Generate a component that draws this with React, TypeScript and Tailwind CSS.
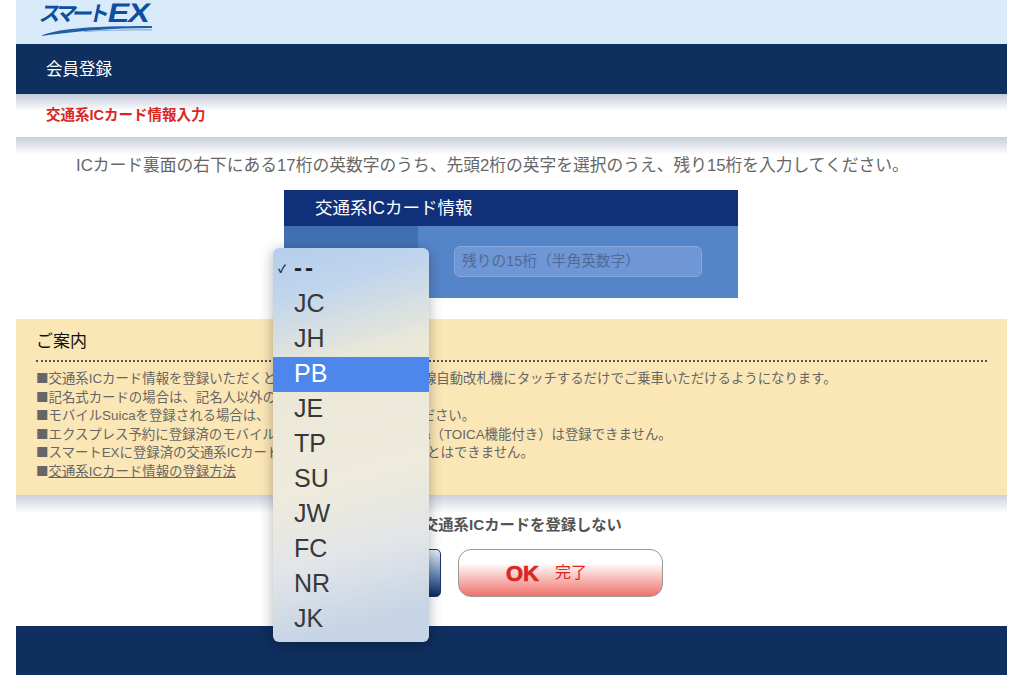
import React from 'react';

const CJK = "font-['Liberation_Sans','Noto_Sans_CJK_JP',sans-serif]";

const cardCodes = ['JC', 'JH', 'PB', 'JE', 'TP', 'SU', 'JW', 'FC', 'NR', 'JK'];

function Logo() {
  return (
    <div className="flex w-[112px] flex-col">
      <span className="flex h-[21px] origin-left -skew-x-12 items-end whitespace-nowrap font-bold text-[#0d4f9c]">
        <span className="text-[21px] leading-[21px] tracking-[-4.500px]">スマート</span>
        <span className="ml-[3px] inline-block origin-left scale-x-[1.2] text-[27px] leading-[21px] tracking-[-1px]">EX</span>
      </span>
      <svg width="112" height="13" viewBox="0 0 112 13" aria-hidden="true">
        <path d="M0 12C18 5 44 2 112 2V4C70 4 40 7 0 12Z" fill="#1f5fa8" />
        <path d="M44 7C62 5.800 85 5.200 112 5.200V6.400C85 6.400 62 6.800 44 8Z" fill="#8fb0d8" />
      </svg>
    </div>
  );
}

function SelectMenu() {
  return (
    <div className="absolute top-[248px] left-[273px] z-10 h-[394px] w-[156px] rounded-[6px] bg-[linear-gradient(165deg,#b3ceee_0%,#c0d5ec_12%,#ebe8d8_30%,#eeebdc_58%,#e2e5e8_75%,#c6d4e5_92%)] pt-[4px] text-[25px] leading-[33px] text-[#37383a] shadow-[0_2px_14px_rgba(0,0,0,0.3)]">
      <div className="relative flex h-[35px] items-center pl-[21px] text-[#1d2430]">
        <span className="absolute left-[5px] text-[11px] font-bold">✓</span>
        <span className="-mt-[5px] text-[24px] font-bold tracking-[3px]">--</span>
      </div>
      {cardCodes.map((code) => (
        <div
          key={code}
          className={code === 'PB' ? 'h-[35px] bg-[#4e87ec] pl-[21px] text-white' : 'h-[35px] pl-[21px]'}
        >
          {code}
        </div>
      ))}
    </div>
  );
}

function CardForm() {
  return (
    <div className="ml-[268px] w-[454px]">
      <div className="flex h-[36px] items-center bg-[#11307a] pl-[31px] text-[17.500px] text-white">交通系ICカード情報</div>
      <div className="flex h-[72px]">
        <div className="w-[134px] bg-[linear-gradient(180deg,#3f6eb0,#5282c4)]" />
        <div className="flex flex-1 items-start bg-[#5585c9] pt-[20px] pl-[36px]">
          <div className="flex h-[31px] w-[248px] items-center rounded-[6px] border border-[#86a8dc] bg-[#6f97d6] pl-[7px] text-[14.700px] text-[#4f6a96]">
            残りの15桁（半角英数字）
          </div>
        </div>
      </div>
    </div>
  );
}

function Square() {
  return <span className="font-['Noto_Sans_CJK_JP',sans-serif] text-[12.500px] leading-none">■</span>;
}

function Notice() {
  return (
    <div className="mt-[21px] h-[176px] bg-[#fbe7b6] px-[20px] pt-[11px] text-[13.400px] leading-[18.600px] whitespace-nowrap text-[#666]">
      <h2 className="border-b-2 border-dotted border-[#555] pb-[6px] text-[17px] leading-[24px] font-normal text-[#111]">ご案内</h2>
      <ul className="mt-[8px]">
        <li><Square />交通系ICカード情報を登録いただくと、東海道・山陽九州新幹線自動改札機にタッチするだけでご乗車いただけるようになります。</li>
        <li><Square />記名式カードの場合は、記名人以外の方は登録できません。</li>
        <li><Square />モバイルSuicaを登録される場合は、 JEを選択して入力してください。</li>
        <li><Square />エクスプレス予約に登録済のモバイルSuica 及び モバイルSuica（TOICA機能付き）は登録できません。</li>
        <li><Square />スマートEXに登録済の交通系ICカードは、重複して登録することはできません。</li>
        <li><Square /><span className="underline">交通系ICカード情報の登録方法</span></li>
      </ul>
    </div>
  );
}

export default function App() {
  return (
    <div className={`relative h-[695px] w-[1024px] overflow-hidden bg-white ${CJK}`}>
      <div className="mx-[16px] w-[991px]">
        <header className="flex h-[44px] items-start bg-[#d9ebfb] pt-[3px] pl-[24px]">
          <Logo />
        </header>
        <nav className="flex h-[50px] items-center bg-[#0f2f5e] pl-[30px] text-[16.500px] text-white">会員登録</nav>
        <div className="flex h-[43px] items-center bg-[linear-gradient(180deg,#c6cadb_0px,#ffffff_17px)] pt-[1px] pl-[30px] text-[14.500px] font-bold text-[#d9281f]">
          交通系ICカード情報入力
        </div>
        <div className="h-[18px] bg-[linear-gradient(180deg,#c9cddd,#ffffff)]" />
        <p className="mb-[13px] h-[17px] pl-[60px] text-[16.750px] leading-[22px] whitespace-nowrap text-[#666]">
          ICカード裏面の右下にある17桁の英数字のうち、先頭2桁の英字を選択のうえ、残り15桁を入力してください。
        </p>
        <div className="pt-[5px]">
          <CardForm />
        </div>
        <Notice />
        <div className="h-[18px] bg-[linear-gradient(180deg,#ccd0e0,#ffffff)]" />
        <p className="h-[36px] pl-[407px] text-[15.300px] leading-[24px] font-bold text-[#555]">交通系ICカードを登録しない</p>
        <div className="flex h-[48px] gap-[17px] pl-[275px]">
          <button className="h-[48px] w-[150px] rounded-[5px] border border-[#20306a] bg-[linear-gradient(180deg,#e8eef5_0%,#6f93ba_50%,#0b2a66_100%)]" />
          <button className="flex h-[48px] w-[205px] items-center justify-center gap-[16px] rounded-[13px] border border-[#999] bg-[linear-gradient(180deg,#ffffff_28%,#f0706a_100%)] pr-[28px] text-[#d9281f]">
            <span className="text-[22px] font-bold [-webkit-text-stroke:0.7px_#d9281f]">OK</span>
            <span className="text-[16px]">完了</span>
          </button>
        </div>
        <footer className="mt-[29px] h-[49px] bg-[#0f2f5e]" />
      </div>
      <SelectMenu />
    </div>
  );
}
